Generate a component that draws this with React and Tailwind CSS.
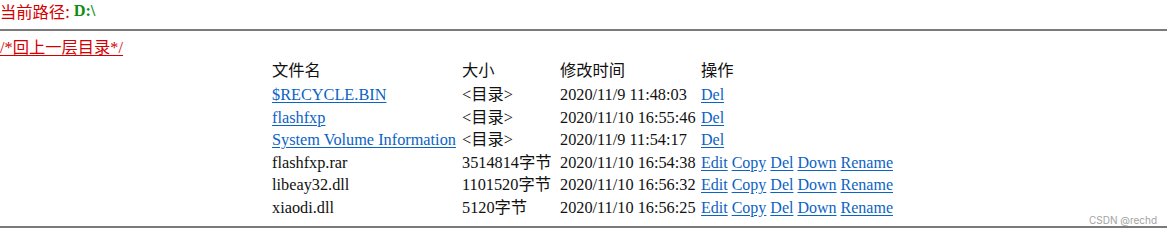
import React from 'react';

const rows = [
  { name: '$RECYCLE.BIN', dir: true, size: '<目录>', time: '2020/11/9 11:48:03' },
  { name: 'flashfxp', dir: true, size: '<目录>', time: '2020/11/10 16:55:46' },
  { name: 'System Volume Information', dir: true, size: '<目录>', time: '2020/11/9 11:54:17' },
  { name: 'flashfxp.rar', size: '3514814字节', time: '2020/11/10 16:54:38' },
  { name: 'libeay32.dll', size: '1101520字节', time: '2020/11/10 16:56:32' },
  { name: 'xiaodi.dll', size: '5120字节', time: '2020/11/10 16:56:25' },
];

function Lnk({ children }) {
  return <a href="#" className="text-[#0b63c4] underline underline-offset-2">{children}</a>;
}

export default function App() {
  return (
    <div
      className="relative w-[1171px] h-[234px] bg-white text-[16.3px] text-[#111] overflow-hidden"
      style={{ fontFamily: '"Liberation Serif", "Noto Sans CJK SC", serif' }}
    >
      <div className="flex items-center h-[22px] gap-[4px]">
        <span className="text-[#d40000] leading-[20px]" style={{ fontFamily: '"Noto Sans CJK SC", sans-serif' }}>当前路径:</span>
        <span className="text-[#118c11] font-bold leading-[20px]">D:\</span>
      </div>
      <div className="mt-[7px] mr-1 border-t-2 border-[#7a7a7a]" />
      <div className="flex items-center h-[18px] mt-[8px]">
        <a href="#" className="text-[#d40000] underline underline-offset-2 leading-none">/*回上一层目录*/</a>
      </div>
      <div className="pr-[6px]">
        <table className="mx-auto border-separate border-spacing-[2px] -mt-[1px]">
          <thead>
            <tr className="leading-[20px]" style={{ fontFamily: '"Noto Sans CJK SC", sans-serif' }}>
              <td className="w-[188px] p-px pb-[4px] text-left align-top">文件名</td>
              <td className="w-[96px] p-px pb-[4px] text-left align-top">大小</td>
              <td className="w-[139px] p-px pb-[4px] text-left align-top">修改时间</td>
              <td className="p-px pb-[4px] text-left align-top">操作</td>
            </tr>
          </thead>
          <tbody>
            {rows.map((r) => (
              <tr key={r.name} className="leading-[18.5px]">
                <td className="p-px whitespace-nowrap">{r.dir ? <Lnk>{r.name}</Lnk> : r.name}</td>
                <td className="p-px whitespace-nowrap">{r.size}</td>
                <td className="p-px whitespace-nowrap">{r.time}</td>
                <td className="p-px whitespace-nowrap text-[16px]">
                  {r.dir ? (
                    <Lnk>Del</Lnk>
                  ) : (
                    <>
                      <Lnk>Edit</Lnk> <Lnk>Copy</Lnk> <Lnk>Del</Lnk> <Lnk>Down</Lnk> <Lnk>Rename</Lnk>
                    </>
                  )}
                </td>
              </tr>
            ))}
          </tbody>
        </table>
      </div>
      <div className="mt-[6px] mr-1 border-t-2 border-[#7a7a7a]" />
      <div
        className="absolute left-[1089px] top-[213px] text-[10px] text-[#a3a3a3]"
        style={{ fontFamily: 'Inter, "Noto Sans", sans-serif' }}
      >
        CSDN @rechd
      </div>
    </div>
  );
}
